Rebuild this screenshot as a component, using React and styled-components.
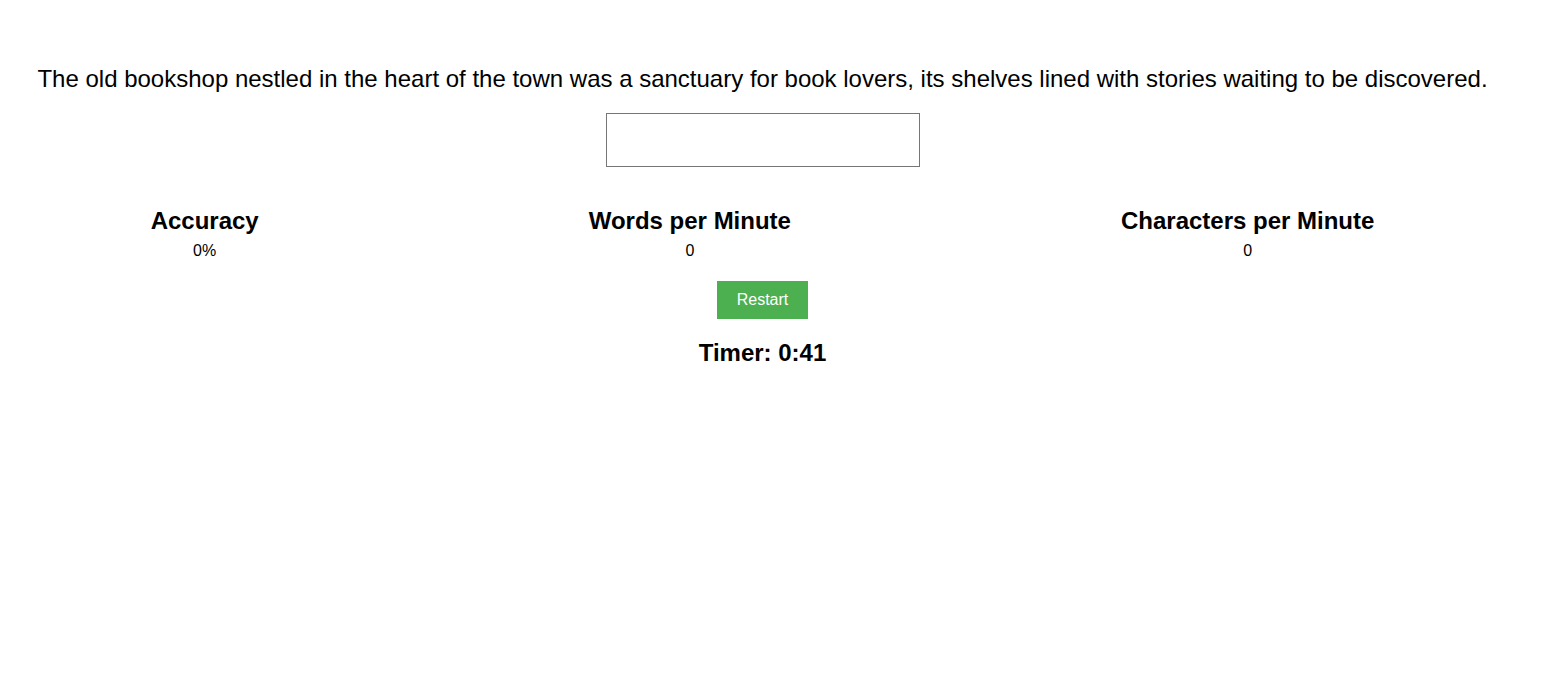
import React from "react";
import styled, { createGlobalStyle } from "styled-components";

const GlobalStyle = createGlobalStyle`
  body {
    margin: 0;
    background: #fff;
    font-family: "Liberation Sans", Arial, sans-serif;
    color: #000;
  }
`;

export default function App() {
    const [text, setText] = React.useState("");

    const stats = [
        { label: "Accuracy", value: "0%" },
        { label: "Words per Minute", value: "0" },
        { label: "Characters per Minute", value: "0" },
    ];

    return (
        <Page>
            <GlobalStyle />
            <Sentence>
                The old bookshop nestled in the heart of the town was a sanctuary for book lovers, its shelves lined with stories waiting to be discovered.
            </Sentence>
            <Input value={text} onChange={({ target }) => setText(target.value)} />
            <Stats>
                {stats.map(s => (
                    <Stat key={s.label}>
                        <StatLabel>{s.label}</StatLabel>
                        <StatValue>{s.value}</StatValue>
                    </Stat>
                ))}
            </Stats>
            <RestartButton onClick={() => setText("")}>Restart</RestartButton>
            <Timer>Timer: 0:41</Timer>
        </Page>
    );
}

const Page = styled.div`
  width: 1525px;
  padding-top: 65px;
  display: flex;
  flex-direction: column;
  align-items: center;
`;

const Sentence = styled.p`
  font-size: 24px;
  line-height: 28px;
  margin: 0 0 20px;
  text-align: center;
`;

const Input = styled.input`
  box-sizing: border-box;
  width: 314px;
  height: 54px;
  border: 1px solid #767676;
  padding: 10px;
  font-size: 16px;
  font-family: inherit;
`;

const Stats = styled.div`
  display: flex;
  justify-content: center;
  gap: 330px;
  margin-top: 40px;
`;

const Stat = styled.div`
  text-align: center;
`;

const StatLabel = styled.h2`
  font-size: 24px;
  line-height: 28px;
  margin: 0 0 7px;
`;

const StatValue = styled.div`
  font-size: 16px;
  line-height: 18px;
`;

const RestartButton = styled.button`
  margin-top: 21px;
  width: 91px;
  height: 38px;
  border: none;
  background: #4caf50;
  color: #fff;
  font-size: 16px;
  font-family: inherit;
  cursor: pointer;
`;

const Timer = styled.h2`
  font-size: 24px;
  line-height: 28px;
  margin: 20px 0 0;
`;
